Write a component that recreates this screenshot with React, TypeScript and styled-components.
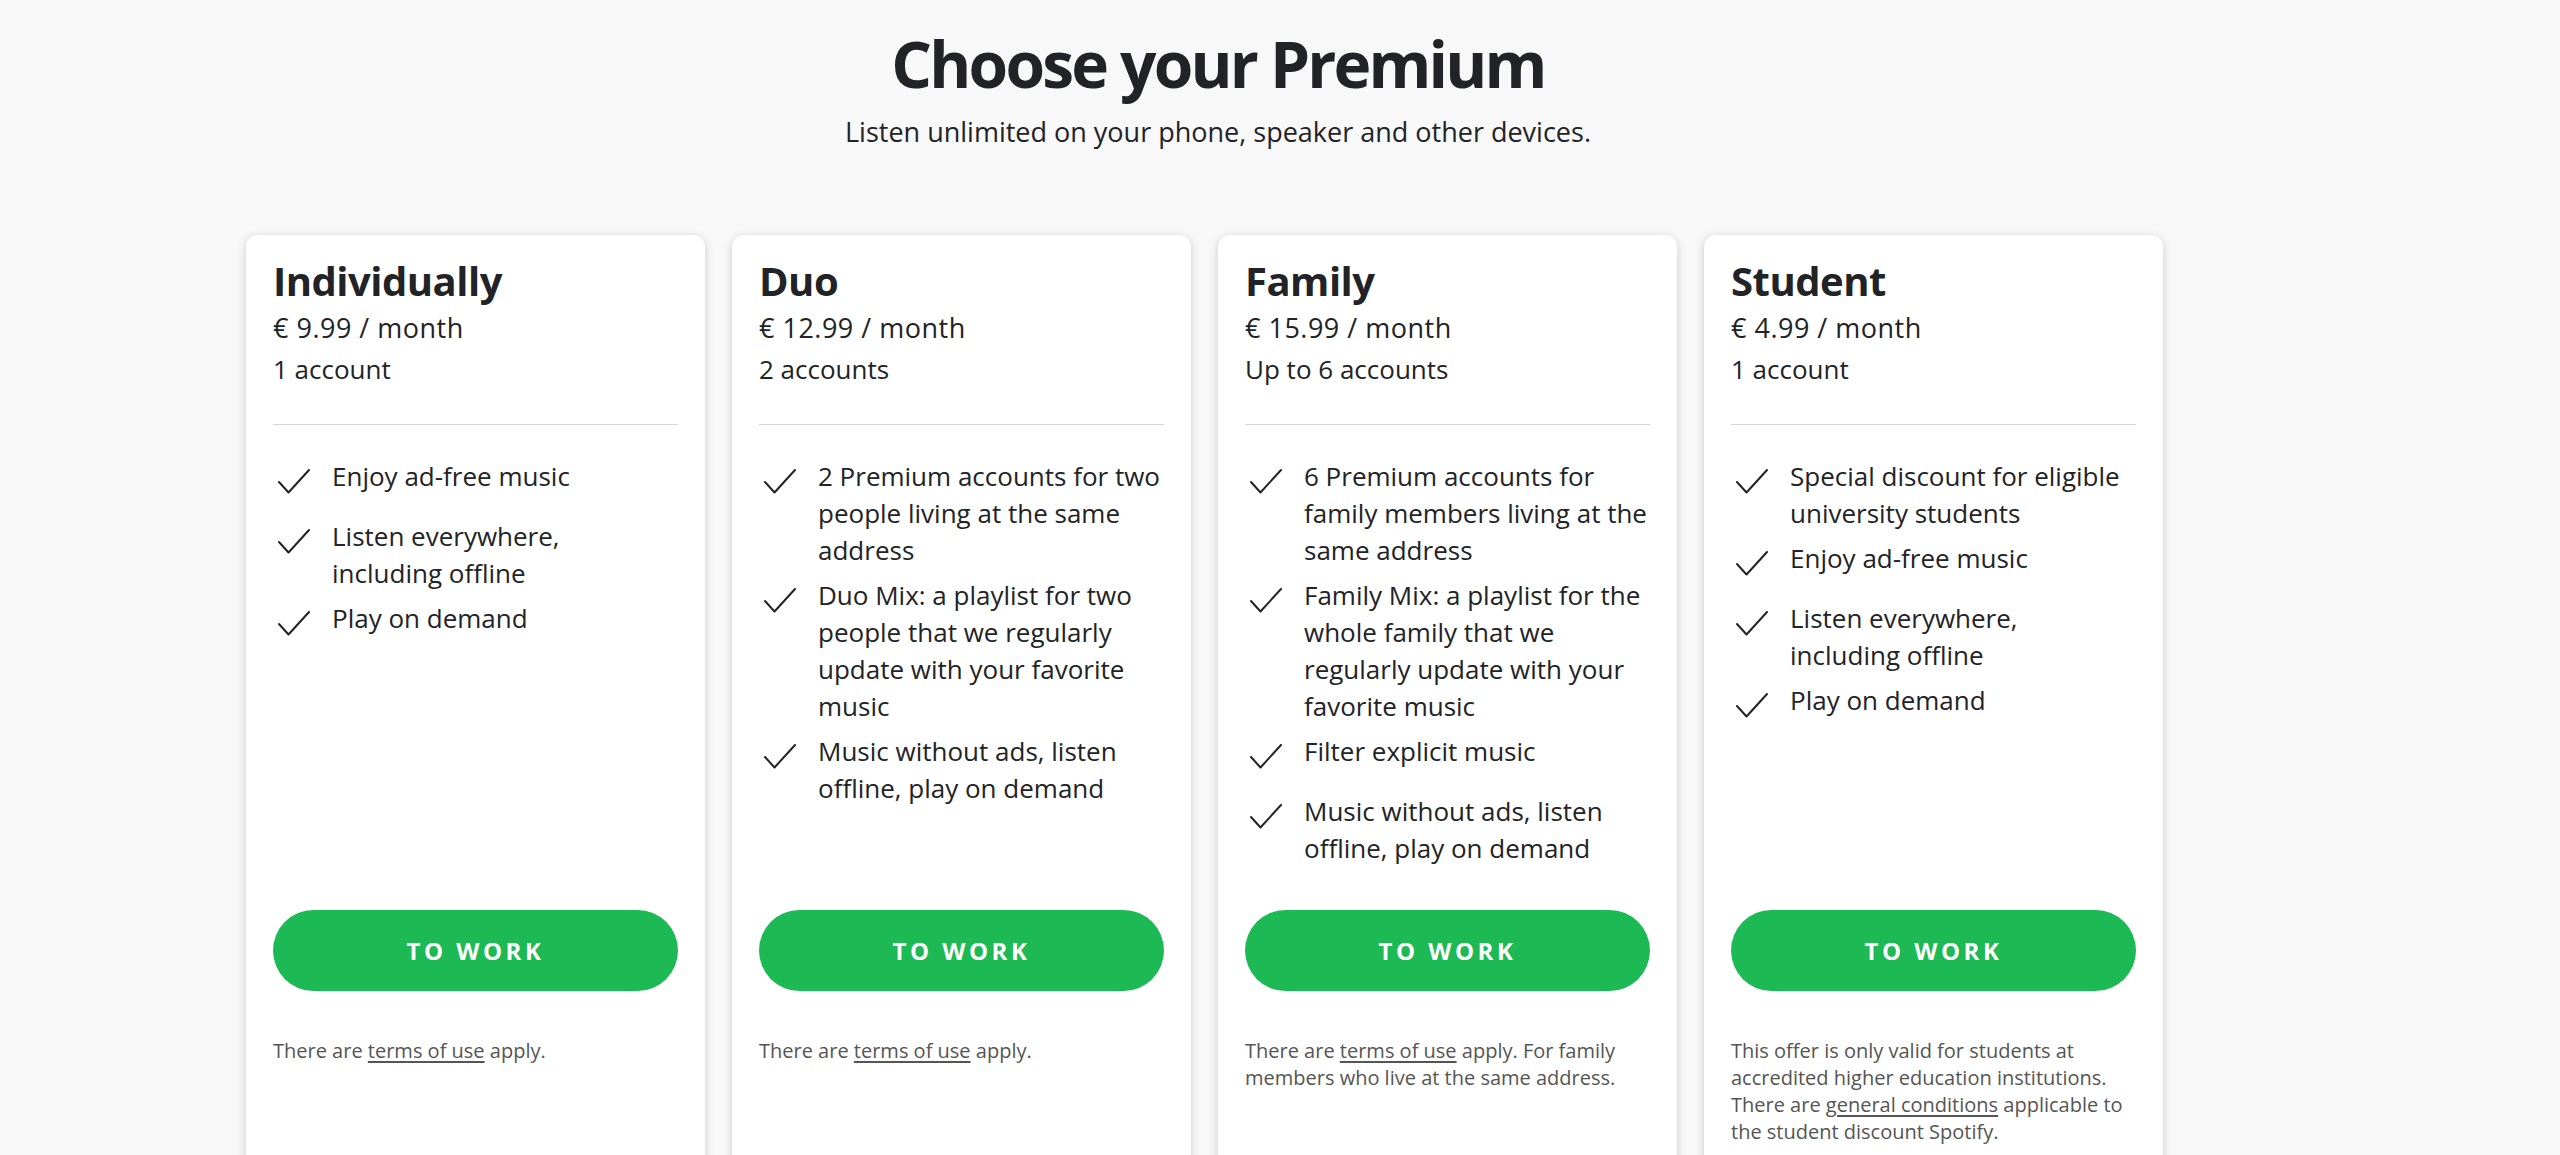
import React from 'react'

import styled, { createGlobalStyle } from 'styled-components'

const GlobalStyle = createGlobalStyle`
    html, body {
        margin: 0;
        padding: 0;
        background: #f8f8f8;
        overflow: hidden;
    }

    body {
        font-family: 'Open Sans', 'Liberation Sans', sans-serif;
        color: #222326;
    }
`;

const Page = styled.main`
    width: 1944px;
    margin-left: 246px;
    padding-top: 31px;
`;

const Header = styled.header`
    text-align: center;
`;

const Heading = styled.h1`
    margin: 0;
    font-size: 64px;
    line-height: 66px;
    font-weight: 700;
    letter-spacing: -2.8px;
    color: #222326;
`;

const Subheading = styled.p`
    margin: 19px 0 0;
    font-size: 27px;
    line-height: 32px;
    color: #222326;
`;

const Plans = styled.section`
    display: flex;
    gap: 27px;
    margin-top: 87px;
`;

const Card = styled.article`
    width: 459px;
    min-height: 1000px;
    box-sizing: border-box;
    padding: 21px 27px 27px;
    background: #fff;
    border-radius: 12px;
    box-shadow: 0 2px 10px rgba(0, 0, 0, 0.18);
    display: flex;
    flex-direction: column;
`;

const PlanName = styled.h2`
    margin: 0;
    font-size: 40px;
    line-height: 50px;
    font-weight: 700;
    letter-spacing: -0.5px;
    color: #222326;
`;

const PlanLine = styled.div`
    font-size: 26px;
    line-height: 41px;
    color: #222326;
`;

const Price = styled(PlanLine)`
    margin: 1px 0 1px;
    font-size: 27px;
    letter-spacing: 0.5px;
`;

const Divider = styled.hr`
    margin: 34px 0 0;
    border: 0;
    border-top: 1px solid #d6d6d6;
`;

const Features = styled.ul`
    list-style: none;
    margin: 0;
    padding: 33px 0 0;
    height: 485px;
    box-sizing: border-box;
`;

const Feature = styled.li`
    display: flex;
    gap: 22px;
    min-height: 52px;
    margin-bottom: 8px;
    font-size: 26px;
    line-height: 37px;
    color: #222326;
`;

const Check = styled.svg`
    flex: none;
    width: 32px;
    height: 25px;
    margin-top: 11px;
    margin-left: 5px;
`;

const Button = styled.button`
    width: 100%;
    height: 81px;
    border: 0;
    border-radius: 41px;
    background: #1db954;
    color: #fff;
    font-family: 'Open Sans', 'Liberation Sans', sans-serif;
    font-size: 24px;
    font-weight: 700;
    letter-spacing: 3.5px;
    cursor: pointer;
`;

const Terms = styled.p`
    margin: 46px 0 0;
    font-size: 20px;
    line-height: 27px;
    color: #555;
`;

const TermsLink = styled.a`
    color: #555;
    text-decoration: underline;
    text-underline-offset: 3px;
`;

type Plan = {
    name: string
    price: string
    accounts: string
    features: string[]
    terms: React.ReactNode
}

const plans: Plan[] = [
    {
        name: 'Individually',
        price: '€ 9.99 / month',
        accounts: '1 account',
        features: ['Enjoy ad-free music', 'Listen everywhere, including\u00a0offline', 'Play on demand'],
        terms: <>There are <TermsLink href="#">terms of use</TermsLink> apply.</>,
    },
    {
        name: 'Duo',
        price: '€ 12.99 / month',
        accounts: '2 accounts',
        features: [
            '2 Premium accounts for two people living at the same address',
            'Duo Mix: a playlist for two people that we regularly update with your favorite music',
            'Music without ads, listen offline, play on demand',
        ],
        terms: <>There are <TermsLink href="#">terms of use</TermsLink> apply.</>,
    },
    {
        name: 'Family',
        price: '€ 15.99 / month',
        accounts: 'Up to 6 accounts',
        features: [
            '6 Premium accounts for family members living at the same address',
            'Family Mix: a playlist for the whole family that we regularly update with your favorite music',
            'Filter explicit music',
            'Music without ads, listen offline, play on demand',
        ],
        terms: <>There are <TermsLink href="#">terms of use</TermsLink> apply. For family members who live at the same address.</>,
    },
    {
        name: 'Student',
        price: '€ 4.99 / month',
        accounts: '1 account',
        features: [
            'Special discount for eligible university students',
            'Enjoy ad-free music',
            'Listen everywhere, including\u00a0offline',
            'Play on demand',
        ],
        terms: <>This offer is only valid for students at accredited higher education institutions. There are <TermsLink href="#">general conditions</TermsLink> applicable to the student discount Spotify.</>,
    },
]

const CheckIcon = () => (
    <Check viewBox="0 0 32 25" fill="none">
        <path d="M1 13 L10.5 23.5 L31 1" stroke="#222326" strokeWidth="2" strokeLinecap="round" strokeLinejoin="round" />
    </Check>
)

const App = () => {
    return (
        <>
            <GlobalStyle />
            <Page>
                <Header>
                    <Heading>Choose your Premium</Heading>
                    <Subheading>Listen unlimited on your phone, speaker and other devices.</Subheading>
                </Header>

                <Plans>
                    {plans.map((plan) => (
                        <Card key={plan.name}>
                            <PlanName>{plan.name}</PlanName>
                            <Price>{plan.price}</Price>
                            <PlanLine>{plan.accounts}</PlanLine>
                            <Divider />
                            <Features>
                                {plan.features.map((feature) => (
                                    <Feature key={feature}>
                                        <CheckIcon />
                                        <span>{feature}</span>
                                    </Feature>
                                ))}
                            </Features>
                            <Button>TO WORK</Button>
                            <Terms>{plan.terms}</Terms>
                        </Card>
                    ))}
                </Plans>
            </Page>
        </>
    )
}

export default App
